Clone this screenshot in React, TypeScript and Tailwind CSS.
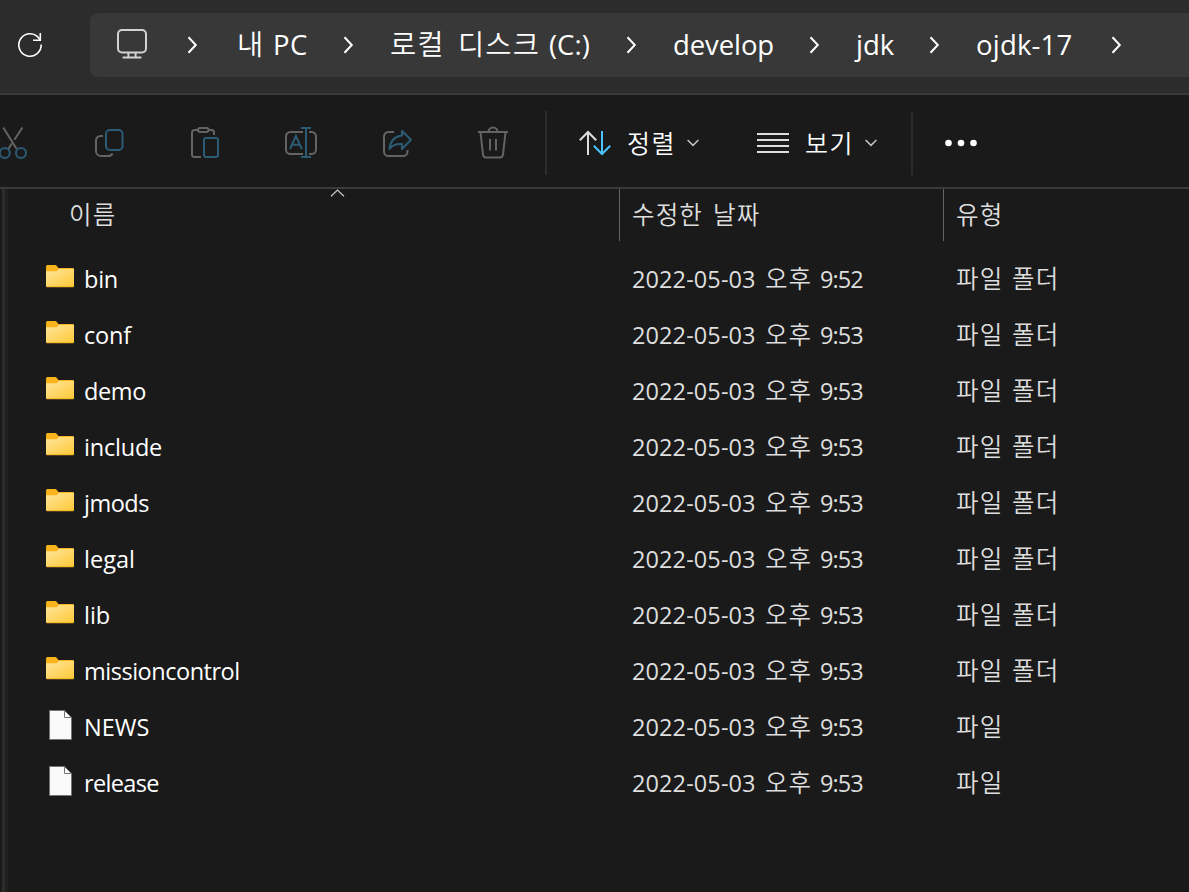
import React from "react";

const LATIN = "font-['Open_Sans','Noto_Sans_CJK_KR',sans-serif]";
const HANGUL = "font-['Noto_Sans_CJK_KR',sans-serif]";

function Chevron({ className }: { className: string }) {
  return (
    <svg className={`shrink-0 ${className}`} width="12" height="18" viewBox="0 0 12 18" fill="none" stroke="#fff" strokeWidth="2">
      <path d="M2.5 1.3 9.8 9 2.5 16.7" />
    </svg>
  );
}

function Caret() {
  return (
    <svg className="shrink-0" width="12" height="8" viewBox="0 0 12 8" fill="none" stroke="#c4c4c4" strokeWidth="1.5">
      <path d="M.6 1 6 6.4 11.4 1" />
    </svg>
  );
}

function Refresh() {
  return (
    <svg className="ml-4 shrink-0" width="28" height="28" viewBox="0 0 28 28" fill="none" stroke="#fff" strokeWidth="1.6">
      <path d="M25.2 13.5A11.2 11.2 0 1 1 23.3 7.7L24.6 9" />
      <path d="M24.3 2v7.2H17" />
    </svg>
  );
}

function Monitor() {
  return (
    <svg className="ml-[26px] shrink-0" width="32" height="32" viewBox="0 0 32 32" fill="none" stroke="#d2d2d2" strokeWidth="2">
      <rect x="2" y="1" width="28" height="22.5" rx="4" />
      <path d="M12.4 23.5v5M19.6 23.5v5M6.6 28.5h18.8" />
    </svg>
  );
}

function AddressBar() {
  return (
    <header className="flex h-[93px] shrink-0 items-start bg-[#2c2c2c] pt-[13px]">
      <div className="flex h-16 w-[90px] shrink-0 items-center">
        <Refresh />
      </div>
      <nav className="flex h-16 flex-1 items-center overflow-hidden rounded-l-lg bg-[#383838] text-[27.5px] whitespace-pre text-white">
        <Monitor />
        <Chevron className="ml-[38px]" />
        <span className="ml-[39px] flex w-[107px] shrink-0 items-baseline pb-[2px]">
          <span className={`w-[36px] text-[28.5px] ${HANGUL} font-[350]`}>내</span>
          <span className={`tracking-[0.5px] ${LATIN}`}>PC</span>
        </span>
        <Chevron className="-ml-[2px]" />
        <span className="ml-[36px] flex w-[235px] shrink-0 items-baseline pb-[2px]">
          <span className={`w-[68px] text-[28.5px] tracking-[1.1px] ${HANGUL} font-[350]`}>로컬</span>
          <span className={`w-[91px] text-[28.5px] tracking-[1.1px] ${HANGUL} font-[350]`}>디스크</span>
          <span className={LATIN}>(C:)</span>
        </span>
        <Chevron className="" />
        <span className={`ml-[36px] w-[136px] shrink-0 tracking-[-0.1px] ${LATIN}`}>develop</span>
        <Chevron className="-ml-[1px]" />
        <span className={`ml-[36px] w-[74px] shrink-0 ${LATIN}`}>jdk</span>
        <Chevron className="-ml-[2px]" />
        <span className={`ml-[36px] w-[137px] shrink-0 tracking-[0.2px] ${LATIN}`}>ojdk-17</span>
        <Chevron className="-ml-[3px]" />
      </nav>
    </header>
  );
}

const GREY = "#646464";
const BLUE = "#2b5b75";

function ToolIcon({ children, className }: { children: React.ReactNode; className: string }) {
  return (
    <svg className={`shrink-0 ${className}`} width="36" height="36" viewBox="0 0 36 36" fill="none" strokeWidth="2">
      {children}
    </svg>
  );
}

function Toolbar() {
  return (
    <div className="flex h-[94px] shrink-0 items-center overflow-hidden border-t-2 border-[#3a3a3a] bg-[#1a1a1a] pt-[4px] whitespace-pre text-white">
      <ToolIcon className="-ml-[5px]">
        <path stroke={GREY} d="M8.2 2.5 21.7 24M27.4 2.5 19.4 14.8M16.8 18.5 13.4 24" />
        <circle stroke={BLUE} cx="9.8" cy="28" r="5" />
        <circle stroke={BLUE} cx="26" cy="28" r="5" />
      </ToolIcon>
      <ToolIcon className="ml-[60px]">
        <path stroke={GREY} d="M12 11H9.5A4.5 4.5 0 0 0 5 15.5V26A5 5 0 0 0 10 31H17Q20.5 31 21.5 28.3" />
        <rect stroke={BLUE} x="15" y="5" width="16.5" height="20" rx="4" />
      </ToolIcon>
      <ToolIcon className="ml-[60px]">
        <path stroke={GREY} d="M11 5H7.5A2.5 2.5 0 0 0 5 7.5V29.5A2.5 2.5 0 0 0 7.5 32H14M22 5H24.5A2.5 2.5 0 0 1 27 7.5V10" />
        <rect stroke={GREY} x="11" y="3" width="10.5" height="4" rx="2" />
        <rect stroke={BLUE} x="17" y="13" width="14" height="19" rx="2" />
      </ToolIcon>
      <ToolIcon className="ml-[60px]">
        <path stroke={GREY} d="M20 7H7.500A4.500 4.500 0 0 0 3 11.500V24.500A4.500 4.500 0 0 0 7.500 29H20M26 7H28.500A4.500 4.500 0 0 1 33 11.500V24.500A4.500 4.500 0 0 1 28.500 29H26" />
        <path stroke={BLUE} d="M23 3V32M18 3H28M18 32H28M7 24 12.900 11 18.800 24M9 19.700H17" />
      </ToolIcon>
      <ToolIcon className="ml-[60px]">
        <path stroke={GREY} d="M15 7H9.5A4.5 4.5 0 0 0 5 11.5V26.500A4.500 4.500 0 0 0 9.500 31H24A4.500 4.500 0 0 0 28.500 26.500V25" />
        <path stroke={BLUE} strokeLinejoin="round" d="M23 6 32 14.800 23 24V19Q14 18.500 10.500 24Q11.500 12 23 10.500Z" />
      </ToolIcon>
      <ToolIcon className="ml-[60px]">
        <path stroke={GREY} d="M3 7H33M13.5 7A4.5 4.5 0 0 1 22.5 7M5.5 7.5 8 29.5Q8.3 32.5 11 32.5H25Q27.7 32.5 28 29.5L30.5 7.5M15 14V25.5M21 14V25.5" />
      </ToolIcon>
      <div className="ml-[34px] h-16 w-[2px] shrink-0 bg-[#2c2c2c]" />
      <svg className="ml-8 shrink-0" width="34" height="28" viewBox="0 0 34 28" fill="none" strokeWidth="2">
        <path stroke="#dedede" d="M9 26V3M.8 11.2 9 3 17.2 11.2" />
        <path stroke="#4cc2ff" d="M23 2V25M14.8 16.8 23 25 31.2 16.8" />
      </svg>
      <span className={`ml-[14px] w-[60px] shrink-0 pb-px text-[25px] tracking-[1.5px] ${HANGUL} font-[350]`}>정렬</span>
      <Caret />
      <svg className="ml-[58px] shrink-0" width="32" height="22" viewBox="0 0 32 22" fill="none" stroke="#dedede" strokeWidth="2">
        <path d="M0 2H32M0 8H32M0 14H32M0 20H32" />
      </svg>
      <span className={`ml-4 w-[60px] shrink-0 pb-px text-[25px] tracking-[1.5px] ${HANGUL} font-[350]`}>보기</span>
      <Caret />
      <div className="ml-[34px] h-16 w-[2px] shrink-0 bg-[#2c2c2c]" />
      <svg className="ml-8 shrink-0" width="34" height="8" viewBox="0 0 34 8" fill="#fff">
        <circle cx="3.5" cy="4" r="3.3" />
        <circle cx="16" cy="4" r="3.3" />
        <circle cx="28.5" cy="4" r="3.3" />
      </svg>
    </div>
  );
}

function FolderIcon() {
  return (
    <svg width="28" height="23" viewBox="0 0 28 23">
      <defs>
        <linearGradient id="folder" x1="0" y1="0" x2="1" y2="1">
          <stop offset="0" stopColor="#ffe69b" />
          <stop offset="1" stopColor="#ffc83a" />
        </linearGradient>
      </defs>
      <path fill="#f9b31c" d="M0 1.5Q0 0 1.5 0H9Q10.2 0 11 1.2L12.5 3H27Q28 3 28 4V21Q28 22.3 26.7 22.3H1.3Q0 22.3 0 21Z" />
      <path fill="url(#folder)" d="M0 6.2H9.5Q11 6.2 12 5L13 4.1H28V20.5Q28 21.3 27 21.3H1Q0 21.3 0 20.5Z" />
    </svg>
  );
}

function FileIcon() {
  return (
    <svg className="ml-[3px]" width="23" height="30" viewBox="0 0 23 30" fill="#fafafa" stroke="#747474">
      <path d="M.5.5H15.5L22.5 7.5V29.5H.5Z" />
      <path d="M15.5.5V7.5H22.5Z" />
    </svg>
  );
}

interface Entry {
  name: string;
  time: string;
  folder: boolean;
  tracking: string;
}

const entries: Entry[] = [
  { name: "bin", time: "9:52", folder: true, tracking: "tracking-[-0.25px]" },
  { name: "conf", time: "9:53", folder: true, tracking: "tracking-[-0.2px]" },
  { name: "demo", time: "9:53", folder: true, tracking: "tracking-[-0.4px]" },
  { name: "include", time: "9:53", folder: true, tracking: "tracking-[-0.2px]" },
  { name: "jmods", time: "9:53", folder: true, tracking: "tracking-[-0.5px]" },
  { name: "legal", time: "9:53", folder: true, tracking: "" },
  { name: "lib", time: "9:53", folder: true, tracking: "" },
  { name: "missioncontrol", time: "9:53", folder: true, tracking: "tracking-[-0.48px]" },
  { name: "NEWS", time: "9:53", folder: false, tracking: "" },
  { name: "release", time: "9:53", folder: false, tracking: "tracking-[-0.65px]" },
];

function Row({ entry }: { entry: Entry }) {
  return (
    <div className="flex h-14 items-center text-[#dedede]">
      <div className={`flex w-[38px] shrink-0 items-center ${entry.folder ? "pb-[5px]" : "pb-[4px]"}`}>
        {entry.folder ? <FolderIcon /> : <FileIcon />}
      </div>
      <span className={`w-[548px] shrink-0 pt-[2px] text-white ${LATIN} ${entry.tracking}`}>{entry.name}</span>
      <span className="flex w-[324px] shrink-0 items-baseline">
        <span className={`w-[133px] tracking-[0.1px] ${LATIN}`}>2022-05-03</span>
        <span className={`w-[55px] text-[24.5px] tracking-[1px] ${HANGUL} font-[350]`}>오후</span>
        <span className={`tracking-[-0.9px] ${LATIN}`}>{entry.time}</span>
      </span>
      <span className={`flex items-baseline pb-[2px] text-[24.5px] tracking-[1.2px] ${HANGUL} font-[350]`}>
        <span className="w-[56px]">파일</span>
        {entry.folder && <span>폴더</span>}
      </span>
    </div>
  );
}

function FileList() {
  return (
    <main className="flex min-h-0 flex-1 bg-[#1a1a1a] text-[23.5px] whitespace-pre">
      <div className="w-[2px] shrink-0 bg-[#1a1a1a]" />
      <div className="w-[3px] shrink-0 bg-[#2c2c2c]" />
      <div className="w-[3px] shrink-0 bg-[#202020]" />
      <div className="flex flex-1 flex-col">
        <div className={`flex h-[52px] shrink-0 text-[24.5px] tracking-[1.1px] text-[#dedede] ${HANGUL} font-[350]`}>
          <div className="flex w-[611px] shrink-0 items-center pl-[61px]">
            <span className="w-[261px] pb-[2px]">이름</span>
            <svg className="self-start" width="15" height="8" viewBox="0 0 15 8" fill="none" stroke="#c8c8c8" strokeWidth="1.2">
              <path d="M1 7.3 7.5 1 14 7.3" />
            </svg>
          </div>
          <div className="flex w-[324px] shrink-0 items-center border-l border-[#636363] pb-[2px] pl-3">
            <span className="w-[81px]">수정한</span>
            <span>날짜</span>
          </div>
          <div className="flex flex-1 items-center border-l border-[#636363] pb-[2px] pl-3">유형</div>
        </div>
        <div className="flex flex-col pt-[10px] pl-[38px]">
          {entries.map((e) => (
            <Row key={e.name} entry={e} />
          ))}
        </div>
      </div>
    </main>
  );
}

export default function App() {
  return (
    <div className="flex h-screen w-full flex-col overflow-hidden bg-[#1a1a1a]">
      <AddressBar />
      <Toolbar />
      <div className="h-[2px] shrink-0 bg-[#3a3a3a]" />
      <FileList />
    </div>
  );
}
